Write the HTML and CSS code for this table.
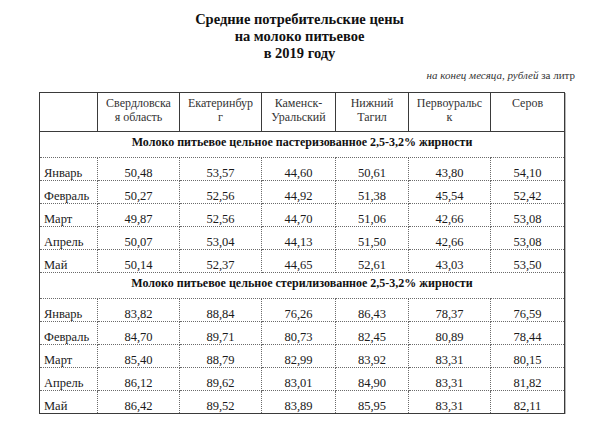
FILE: index.html
```html
<!DOCTYPE html>
<html lang="ru">
<head>
<meta charset="utf-8">
<title>Средние потребительские цены на молоко питьевое в 2019 году</title>
<link rel="stylesheet" href="styles.css">
</head>
<body>
<div class="page">
  <h1 class="title">Средние потребительские цены<br>на молоко питьевое<br>в 2019 году</h1>
  <p class="unit"><i>на конец месяца, рублей</i> за литр</p>
  <table class="prices">
    <colgroup>
      <col class="c0"><col class="c1"><col class="c2"><col class="c3"><col class="c4"><col class="c5"><col class="c6">
    </colgroup>
    <thead>
      <tr>
        <th></th>
        <th>Свердловска<br>я область</th>
        <th>Екатеринбур<br>г</th>
        <th>Каменск-<br>Уральский</th>
        <th>Нижний<br>Тагил</th>
        <th>Первоуральс<br>к</th>
        <th>Серов</th>
      </tr>
    </thead>
    <tbody>
      <tr class="section"><td colspan="7">Молоко питьевое цельное пастеризованное 2,5-3,2% жирности</td></tr>
      <tr><td>Январь</td><td>50,48</td><td>53,57</td><td>44,60</td><td>50,61</td><td>43,80</td><td>54,10</td></tr>
      <tr><td>Февраль</td><td>50,27</td><td>52,56</td><td>44,92</td><td>51,38</td><td>45,54</td><td>52,42</td></tr>
      <tr><td>Март</td><td>49,87</td><td>52,56</td><td>44,70</td><td>51,06</td><td>42,66</td><td>53,08</td></tr>
      <tr><td>Апрель</td><td>50,07</td><td>53,04</td><td>44,13</td><td>51,50</td><td>42,66</td><td>53,08</td></tr>
      <tr><td>Май</td><td>50,14</td><td>52,37</td><td>44,65</td><td>52,61</td><td>43,03</td><td>53,50</td></tr>
      <tr class="section"><td colspan="7">Молоко питьевое цельное стерилизованное 2,5-3,2% жирности</td></tr>
      <tr><td>Январь</td><td>83,82</td><td>88,84</td><td>76,26</td><td>86,43</td><td>78,37</td><td>76,59</td></tr>
      <tr><td>Февраль</td><td>84,70</td><td>89,71</td><td>80,73</td><td>82,45</td><td>80,89</td><td>78,44</td></tr>
      <tr><td>Март</td><td>85,40</td><td>88,79</td><td>82,99</td><td>83,92</td><td>83,31</td><td>80,15</td></tr>
      <tr><td>Апрель</td><td>86,12</td><td>89,62</td><td>83,01</td><td>84,90</td><td>83,31</td><td>81,82</td></tr>
      <tr><td>Май</td><td>86,42</td><td>89,52</td><td>83,89</td><td>85,95</td><td>83,31</td><td>82,11</td></tr>
    </tbody>
  </table>
</div>
</body>
</html>
```

FILE: styles.css
```css
html, body {
  margin: 0;
  padding: 0;
  background: #ffffff;
}

body {
  font-family: "Liberation Serif", "Times New Roman", serif;
  color: #1a1a1a;
}

.page {
  width: 599px;
  padding-top: 11px;
}

.title {
  margin: 0;
  text-align: center;
  font-family: "Liberation Serif", "Times New Roman", serif;
  font-size: 14.5px;
  line-height: 17px;
  font-weight: bold;
  color: #111;
}

.unit {
  margin: 7px 24px 0 0;
  text-align: right;
  font-family: "Liberation Serif", "Times New Roman", serif;
  font-size: 11px;
  line-height: 12px;
  color: #333;
}

.unit i {
  font-style: italic;
}

.prices {
  margin: 11px 0 0 39px;
  width: 526px;
  border-collapse: collapse;
  table-layout: fixed;
  font-family: "Liberation Serif", "Times New Roman", serif;
  font-size: 12.5px;
  border: 1.5px solid #3a3a3a;
  box-shadow: 1px 1px 0 #b8b8b8;
}

.c0 { width: 58px; }
.c1 { width: 82px; }
.c2 { width: 82px; }
.c3 { width: 74px; }
.c4 { width: 73px; }
.c5 { width: 82px; }
.c6 { width: 74px; }

.prices th {
  font-family: "Liberation Serif", "Times New Roman", serif;
  font-weight: normal;
  font-size: 12px;
  line-height: 14px;
  height: 35px;
  vertical-align: top;
  text-align: center;
  padding: 3px 2px 0;
  border: 1px solid #3a3a3a;
  color: #333;
}

.prices td {
  font-family: "Liberation Serif", "Times New Roman", serif;
  height: 22px;
  padding: 0 2px;
  vertical-align: bottom;
  text-align: center;
  line-height: 14px;
  border: 1px dotted #6a6a6a;
}

.prices td:first-child {
  text-align: left;
  padding-left: 4px;
}

.prices tr.section td {
  text-align: center;
  font-weight: bold;
  font-size: 12px;
  vertical-align: top;
  padding: 3px 0 0;
  color: #111;
}
```
